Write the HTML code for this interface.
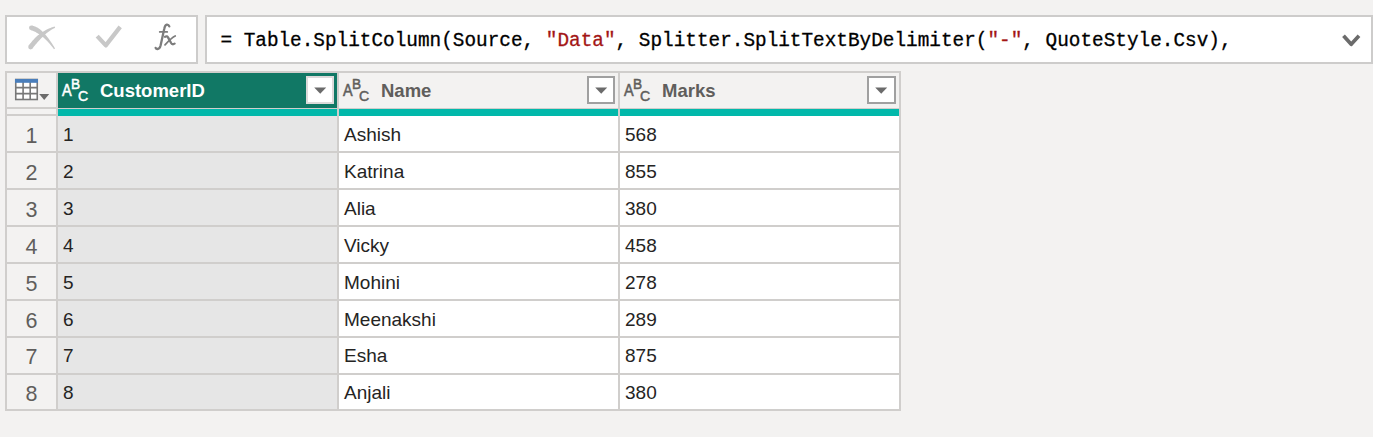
<!DOCTYPE html>
<html><head><meta charset="utf-8"><style>
*{box-sizing:border-box}
html,body{margin:0;padding:0}
body{width:1373px;height:437px;overflow:hidden;background:#f3f2f1;position:relative;font-family:"Liberation Sans",sans-serif}
.abs{position:absolute}
.box{position:absolute;background:#fff;border:2px solid #cdcccb}
.mono{position:absolute;font-family:"Liberation Mono",monospace;font-size:19.33px;white-space:pre;line-height:1;color:#000}
.str{color:#a31515;-webkit-text-stroke:0.3px #a31515}
.abc{position:absolute;width:30px;height:26px;font-family:"Liberation Sans",sans-serif;font-weight:normal;font-size:16px;line-height:1;-webkit-text-stroke:0.55px currentColor}
.abc span{position:absolute}
.abc .a{left:0.6px;top:5px;transform:scaleX(0.9);transform-origin:0 0}
.abc .b{left:10.3px;top:-2.5px;font-size:15.5px;transform:scaleX(0.88);transform-origin:0 0}
.abc .c{left:16.5px;top:11px;font-size:16px;transform:scale(0.88,0.93);transform-origin:0 0}
.dd{position:absolute;background:#fff;border:2px solid #a0a0a0}
.hdr{position:absolute;font-weight:bold;font-size:18.5px;line-height:1;white-space:pre}
.cell{position:absolute;font-size:19px;line-height:1;color:#252423;white-space:pre}
.rn{position:absolute;font-size:21.5px;line-height:1;color:#605e5c;width:49px;text-align:center}
</style></head><body>

<div class="box" style="left:5px;top:15px;width:193px;height:49px"></div>
<svg class="abs" style="left:0;top:0" width="200" height="64">
<path d="M30.85 30.14 L31.42 30.28 L32.00 30.46 L32.58 30.66 L33.17 30.89 L33.77 31.15 L34.38 31.45 L35.00 31.77 L35.62 32.12 L36.26 32.50 L36.92 32.89 L37.61 33.28 L38.31 33.69 L39.03 34.15 L39.75 34.63 L40.48 35.15 L41.22 35.71 L41.97 36.29 L42.73 36.92 L43.49 37.57 L44.26 38.26 L45.04 38.99 L45.82 39.75 L46.61 40.54 L47.41 41.36 L48.21 42.22 L49.01 43.11 L49.83 44.04 L50.64 45.00 L51.46 45.99 L52.29 47.01 L53.12 48.07 L53.96 49.16 L55.04 48.44 L54.32 47.25 L53.61 46.09 L52.90 44.95 L52.19 43.85 L51.48 42.78 L50.78 41.74 L50.07 40.72 L49.37 39.74 L48.67 38.78 L47.97 37.85 L47.27 36.96 L46.57 36.09 L45.87 35.25 L45.18 34.43 L44.48 33.65 L43.78 32.89 L43.08 32.17 L42.38 31.47 L41.67 30.80 L40.97 30.16 L40.26 29.54 L39.55 28.96 L38.81 28.44 L38.05 27.98 L37.29 27.55 L36.53 27.15 L35.77 26.79 L35.01 26.46 L34.24 26.16 L33.48 25.89 L32.71 25.66 L31.95 25.46Z" fill="#c8c8c8"/><circle cx="31.4" cy="27.8" r="2.4" fill="#c8c8c8"/>
<path d="M54.69 26.58 L53.86 26.80 L53.03 27.03 L52.19 27.29 L51.35 27.57 L50.52 27.88 L49.68 28.21 L48.84 28.57 L48.00 28.94 L47.17 29.35 L46.33 29.77 L45.49 30.22 L44.65 30.69 L43.81 31.19 L42.97 31.71 L42.14 32.26 L41.30 32.83 L40.46 33.42 L39.63 34.04 L38.80 34.67 L37.96 35.34 L37.13 36.02 L36.30 36.73 L35.51 37.50 L34.74 38.31 L33.97 39.14 L33.21 39.99 L32.44 40.87 L31.69 41.76 L30.93 42.68 L30.18 43.62 L29.43 44.58 L28.68 45.56 L32.52 48.44 L33.23 47.51 L33.94 46.60 L34.66 45.71 L35.37 44.84 L36.09 43.99 L36.80 43.17 L37.52 42.37 L38.24 41.59 L38.96 40.83 L39.66 40.08 L40.32 39.31 L40.99 38.56 L41.67 37.83 L42.34 37.13 L43.02 36.44 L43.70 35.77 L44.38 35.13 L45.07 34.50 L45.76 33.89 L46.46 33.31 L47.15 32.74 L47.86 32.19 L48.56 31.66 L49.27 31.16 L49.98 30.67 L50.70 30.20 L51.42 29.75 L52.15 29.33 L52.88 28.92 L53.62 28.53 L54.36 28.16 L55.11 27.82Z" fill="#c8c8c8"/><circle cx="30.6" cy="47.0" r="2.4" fill="#c8c8c8"/>
<path d="M97.2 36.1 L105.8 45.4 L120.2 26.9" stroke="#c8c8c8" stroke-width="4.2" fill="none" stroke-linecap="butt" stroke-linejoin="round"/>
<g stroke="#7c7c7c" fill="none" stroke-linecap="round">
<path d="M169.3 26.4 Q168.6 24.4 166.8 24.6 Q164.9 24.9 164.2 29 L160.6 45.5 Q159.6 49.2 157.3 49 Q155.8 48.8 155.6 47.8" stroke-width="2.3"/>
<path d="M159.8 31.9 H167.2" stroke-width="1.9"/>
<path d="M165 36.7 Q167.2 35.5 168.3 37.9 L171.1 43 Q172.4 45.1 174.6 43.6" stroke-width="2.3"/>
<path d="M175.2 36 Q172 37.3 165 44.8" stroke-width="1.8"/>
</g>
</svg>
<div class="box" style="left:205px;top:15px;width:1168px;height:49px"></div>
<div class="mono" style="left:220.4px;top:32px;letter-spacing:0.023px;-webkit-text-stroke:0.3px #000">= Table.SplitColumn(Source, <span class="str">"Data"</span>, Splitter.SplitTextByDelimiter(<span class="str">"-"</span>, QuoteStyle.Csv),</div>
<svg class="abs" style="left:1336px;top:28px" width="30" height="24"><path d="M7.5 7.8 L15.2 16.3 L23 7.8" stroke="#6b6b6b" stroke-width="3.7" fill="none" stroke-linejoin="round"/></svg>
<div class="abs" style="left:5px;top:71px;width:896px;height:340px;background:#d0cecc"></div>
<div class="abs" style="left:7px;top:73px;width:49px;height:34px;background:#f3f2f1"></div>
<div class="abs" style="left:7px;top:109px;width:49px;height:5px;background:#f3f2f1"></div>
<svg class="abs" style="left:14px;top:78px" width="40" height="26">
<rect x="1.75" y="1.5" width="21.5" height="20" fill="#fff" stroke="#787878" stroke-width="1.6"/>
<path d="M9.1 4v18M16.2 4v18M1 9.6h23M1 15.6h23" stroke="#787878" stroke-width="1.6"/>
<rect x="1" y="1" width="23" height="3.8" fill="#4a7ebb"/>
<path d="M25.2 16h10l-5 6z" fill="#6b6b6b"/>
</svg>
<div class="abs" style="left:58px;top:73px;width:279px;height:35px;background:#117865"></div>
<div class="abs" style="left:58px;top:109px;width:279px;height:7px;background:#01b8aa"></div>
<div class="abc" style="left:61px;top:78px;color:#fff"><span class="a">A</span><span class="b">B</span><span class="c">C</span></div>
<div class="hdr" style="left:100px;top:82px;color:#fff">CustomerID</div>
<div class="dd" style="left:306px;top:76px;width:28px;height:28px;border-color:#dcdada"><svg width="28" height="28" style="position:absolute;left:0;top:0"><path d="M6.2 9.5h12l-6 6.2z" fill="#6b6b6b"/></svg></div>
<div class="abs" style="left:339px;top:73px;width:279px;height:35px;background:#f3f2f1"></div>
<div class="abs" style="left:339px;top:109px;width:279px;height:7px;background:#01b8aa"></div>
<div class="abc" style="left:342px;top:78px;color:#605e5c"><span class="a">A</span><span class="b">B</span><span class="c">C</span></div>
<div class="hdr" style="left:381px;top:82px;color:#605e5c">Name</div>
<div class="dd" style="left:587px;top:76px;width:28px;height:28px;border-color:#a0a0a0"><svg width="28" height="28" style="position:absolute;left:0;top:0"><path d="M6.2 9.5h12l-6 6.2z" fill="#6b6b6b"/></svg></div>
<div class="abs" style="left:620px;top:73px;width:279px;height:35px;background:#f3f2f1"></div>
<div class="abs" style="left:620px;top:109px;width:279px;height:7px;background:#01b8aa"></div>
<div class="abc" style="left:623px;top:78px;color:#605e5c"><span class="a">A</span><span class="b">B</span><span class="c">C</span></div>
<div class="hdr" style="left:662px;top:82px;color:#605e5c">Marks</div>
<div class="dd" style="left:867px;top:76px;width:29px;height:28px;border-color:#a0a0a0"><svg width="29" height="28" style="position:absolute;left:0;top:0"><path d="M6.2 9.5h12l-6 6.2z" fill="#6b6b6b"/></svg></div>
<div class="abs" style="left:7px;top:116px;width:49px;height:35px;background:#f3f2f1"></div>
<div class="rn" style="left:7px;top:126px">1</div>
<div class="abs" style="left:58px;top:116px;width:279px;height:35px;background:#e6e6e6"></div>
<div class="cell" style="left:63px;top:125px">1</div>
<div class="abs" style="left:339px;top:116px;width:279px;height:35px;background:#fff"></div>
<div class="cell" style="left:344px;top:125px">Ashish</div>
<div class="abs" style="left:620px;top:116px;width:279px;height:35px;background:#fff"></div>
<div class="cell" style="left:625px;top:125px">568</div>
<div class="abs" style="left:7px;top:153px;width:49px;height:35px;background:#f3f2f1"></div>
<div class="rn" style="left:7px;top:163px">2</div>
<div class="abs" style="left:58px;top:153px;width:279px;height:35px;background:#e6e6e6"></div>
<div class="cell" style="left:63px;top:162px">2</div>
<div class="abs" style="left:339px;top:153px;width:279px;height:35px;background:#fff"></div>
<div class="cell" style="left:344px;top:162px">Katrina</div>
<div class="abs" style="left:620px;top:153px;width:279px;height:35px;background:#fff"></div>
<div class="cell" style="left:625px;top:162px">855</div>
<div class="abs" style="left:7px;top:190px;width:49px;height:35px;background:#f3f2f1"></div>
<div class="rn" style="left:7px;top:200px">3</div>
<div class="abs" style="left:58px;top:190px;width:279px;height:35px;background:#e6e6e6"></div>
<div class="cell" style="left:63px;top:199px">3</div>
<div class="abs" style="left:339px;top:190px;width:279px;height:35px;background:#fff"></div>
<div class="cell" style="left:344px;top:199px">Alia</div>
<div class="abs" style="left:620px;top:190px;width:279px;height:35px;background:#fff"></div>
<div class="cell" style="left:625px;top:199px">380</div>
<div class="abs" style="left:7px;top:227px;width:49px;height:35px;background:#f3f2f1"></div>
<div class="rn" style="left:7px;top:237px">4</div>
<div class="abs" style="left:58px;top:227px;width:279px;height:35px;background:#e6e6e6"></div>
<div class="cell" style="left:63px;top:236px">4</div>
<div class="abs" style="left:339px;top:227px;width:279px;height:35px;background:#fff"></div>
<div class="cell" style="left:344px;top:236px">Vicky</div>
<div class="abs" style="left:620px;top:227px;width:279px;height:35px;background:#fff"></div>
<div class="cell" style="left:625px;top:236px">458</div>
<div class="abs" style="left:7px;top:264px;width:49px;height:35px;background:#f3f2f1"></div>
<div class="rn" style="left:7px;top:274px">5</div>
<div class="abs" style="left:58px;top:264px;width:279px;height:35px;background:#e6e6e6"></div>
<div class="cell" style="left:63px;top:273px">5</div>
<div class="abs" style="left:339px;top:264px;width:279px;height:35px;background:#fff"></div>
<div class="cell" style="left:344px;top:273px">Mohini</div>
<div class="abs" style="left:620px;top:264px;width:279px;height:35px;background:#fff"></div>
<div class="cell" style="left:625px;top:273px">278</div>
<div class="abs" style="left:7px;top:301px;width:49px;height:35px;background:#f3f2f1"></div>
<div class="rn" style="left:7px;top:311px">6</div>
<div class="abs" style="left:58px;top:301px;width:279px;height:35px;background:#e6e6e6"></div>
<div class="cell" style="left:63px;top:310px">6</div>
<div class="abs" style="left:339px;top:301px;width:279px;height:35px;background:#fff"></div>
<div class="cell" style="left:344px;top:310px">Meenakshi</div>
<div class="abs" style="left:620px;top:301px;width:279px;height:35px;background:#fff"></div>
<div class="cell" style="left:625px;top:310px">289</div>
<div class="abs" style="left:7px;top:338px;width:49px;height:35px;background:#f3f2f1"></div>
<div class="rn" style="left:7px;top:347px">7</div>
<div class="abs" style="left:58px;top:338px;width:279px;height:35px;background:#e6e6e6"></div>
<div class="cell" style="left:63px;top:346px">7</div>
<div class="abs" style="left:339px;top:338px;width:279px;height:35px;background:#fff"></div>
<div class="cell" style="left:344px;top:346px">Esha</div>
<div class="abs" style="left:620px;top:338px;width:279px;height:35px;background:#fff"></div>
<div class="cell" style="left:625px;top:346px">875</div>
<div class="abs" style="left:7px;top:375px;width:49px;height:34px;background:#f3f2f1"></div>
<div class="rn" style="left:7px;top:384px">8</div>
<div class="abs" style="left:58px;top:375px;width:279px;height:34px;background:#e6e6e6"></div>
<div class="cell" style="left:63px;top:383px">8</div>
<div class="abs" style="left:339px;top:375px;width:279px;height:34px;background:#fff"></div>
<div class="cell" style="left:344px;top:383px">Anjali</div>
<div class="abs" style="left:620px;top:375px;width:279px;height:34px;background:#fff"></div>
<div class="cell" style="left:625px;top:383px">380</div>
</body></html>
